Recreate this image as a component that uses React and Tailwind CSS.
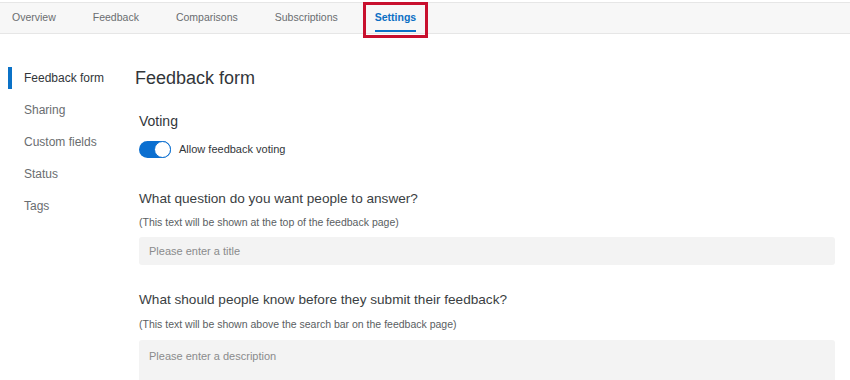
import { useState } from "react";

const tabs = ["Overview", "Feedback", "Comparisons", "Subscriptions", "Settings"];
const sideItems = ["Feedback form", "Sharing", "Custom fields", "Status", "Tags"];

function Toggle({ on, onChange }) {
  return (
    <button
      onClick={() => onChange(!on)}
      className={`relative h-[17px] w-[32px] rounded-full ${on ? "bg-[#0b6fd0]" : "bg-[#c9c9c9]"}`}
    >
      <span
        className={`absolute top-0 h-[17px] w-[17px] rounded-full bg-white border border-[#0b6fd0] ${on ? "right-0" : "left-0"}`}
      />
    </button>
  );
}

export default function App() {
  const [voting, setVoting] = useState(true);
  const active = "Settings";

  return (
    <div className="w-[850px] h-[380px] overflow-hidden bg-white font-['Liberation_Sans',Arial,sans-serif] text-[#32363a]">
      {/* top tabs */}
      <div className="mt-[2px] h-[32px] border-t border-b border-[#e6e6e6] bg-[#f7f7f7] flex items-stretch pl-[12px] gap-[37px]">
        {tabs.map((t) =>
          t === active ? (
            <div key={t} className="relative flex items-center text-[10.5px] font-bold text-[#0b6fc4]">
              {t}
              <span className="absolute left-0 right-0 bottom-[1px] h-[2px] bg-[#0b72c7]" />
              <span className="absolute left-[-12px] right-[-12px] top-[-1px] bottom-[-5px] border-[3px] border-[#c8102e]" />
            </div>
          ) : (
            <div key={t} className="flex items-center text-[10.5px] text-[#6a6d70]">
              {t}
            </div>
          )
        )}
      </div>

      <div className="flex pt-[33px]">
        {/* sidebar */}
        <div className="w-[135px] flex flex-col gap-[10px] shrink-0">
          {sideItems.map((s, i) => (
            <div key={s} className="relative h-[22px] flex items-center pl-[24px]">
              {i === 0 && <span className="absolute left-[8px] top-0 h-[22px] w-[4px] bg-[#0b72c7]" />}
              <span className={`text-[12px] ${i === 0 ? "text-[#32363a]" : "text-[#6a6d70]"}`}>{s}</span>
            </div>
          ))}
        </div>

        {/* content */}
        <div className="flex-1 pr-[15px]">
          <div className="h-[22px] flex items-center text-[18px] text-[#32363a]">Feedback form</div>

          <div className="pl-[4px]">
            <div className="mt-[23px] text-[14px] leading-[18px] text-[#32363a]">Voting</div>
            <div className="mt-[11px] flex items-center gap-[8px]">
              <Toggle on={voting} onChange={setVoting} />
              <span className="text-[11px] text-[#32363a]">Allow feedback voting</span>
            </div>

            <div className="mt-[32px] text-[13.6px] leading-[18px] text-[#3a3e42]">What question do you want people to answer?</div>
            <div className="mt-[7px] text-[10.5px] leading-[14px] text-[#5a5e62]">
              (This text will be shown at the top of the feedback page)
            </div>
            <input
              placeholder="Please enter a title"
              className="mt-[8px] block w-full h-[28px] rounded-[3px] bg-[#f3f3f3] px-[10px] text-[11px] outline-none placeholder:text-[#8a8b8c]"
            />

            <div className="mt-[26px] text-[13.6px] leading-[18px] text-[#3a3e42]">
              What should people know before they submit their feedback?
            </div>
            <div className="mt-[8px] text-[10.5px] leading-[14px] text-[#5a5e62]">
              (This text will be shown above the search bar on the feedback page)
            </div>
            <textarea
              placeholder="Please enter a description"
              className="mt-[9px] block w-full h-[80px] resize-none rounded-[3px] bg-[#f3f3f3] px-[10px] pt-[8px] text-[11px] outline-none placeholder:text-[#8a8b8c]"
            />
          </div>
        </div>
      </div>
    </div>
  );
}
